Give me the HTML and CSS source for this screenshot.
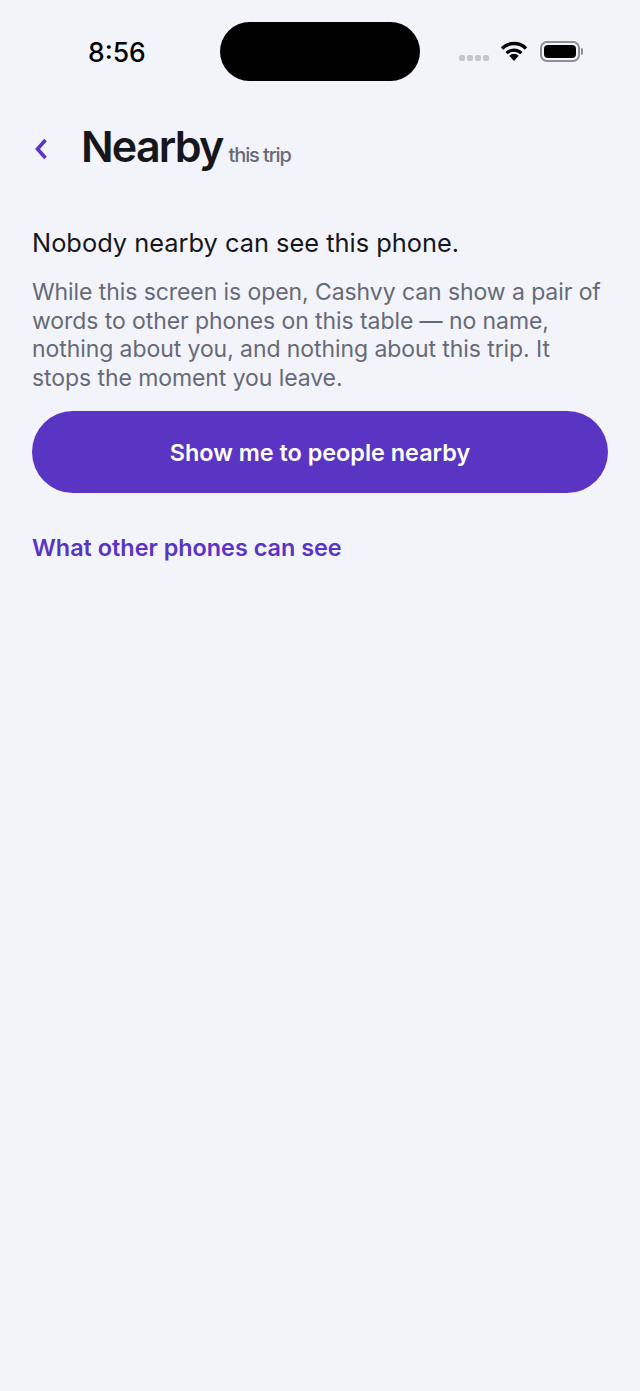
FILE: index.html
```html
<!DOCTYPE html>
<html lang="en">
<head>
  <meta charset="UTF-8">
  <meta name="viewport" content="width=device-width, initial-scale=1.0">
  <title>Nearby</title>
  <link rel="stylesheet" href="styles.css">
</head>
<body>
  <div class="status">
    <span class="time">8:56</span>
    <div class="island"></div>
    <div class="status-icons">
      <div class="signal"><i></i><i></i><i></i><i></i></div>
      <svg class="wifi" width="28" height="22" viewBox="0 0 28 22">
        <path d="M2 8.5 A17 17 0 0 1 26 8.5" fill="none" stroke="#000" stroke-width="3.4"/>
        <path d="M6.6 13.1 A10.5 10.5 0 0 1 21.4 13.1" fill="none" stroke="#000" stroke-width="3.2"/>
        <path d="M9.3 15.8 A6.7 6.7 0 0 1 18.7 15.8 L14 21 Z" fill="#000"/>
      </svg>
      <div class="battery"><div class="battery-fill"></div></div>
      <div class="battery-tip"></div>
    </div>
  </div>

  <div class="header">
    <svg class="back" width="16" height="24" viewBox="0 0 16 24">
      <path d="M13.5 3 L5.5 12 L13.5 21" fill="none" stroke="#5a34c2" stroke-width="3.6"/>
    </svg>
    <h1 class="title">Nearby</h1>
    <span class="subtitle">this trip</span>
  </div>

  <div class="content">
    <p class="lead">Nobody nearby can see this phone.</p>
    <p class="body-text">While this screen is open, Cashvy can show a pair of words to other phones on this table — no name, nothing about you, and nothing about this trip. It stops the moment you leave.</p>
    <button class="primary">Show me to people nearby</button>
    <a class="link">What other phones can see</a>
  </div>
</body>
</html>
```

FILE: styles.css
```css
* {
  box-sizing: border-box;
}

html, body {
  margin: 0;
  height: 100%;
}

body {
  background: #f3f4f9;
  font-family: Inter, "Liberation Sans", sans-serif;
  color: #16171c;
  overflow: hidden;
}

.status {
  height: 81px;
  padding: 22px 56px 0 88px;
  display: flex;
  align-items: flex-start;
}

.time {
  width: 132px;
  margin-top: 15px;
  font-size: 26.5px;
  line-height: 30px;
  font-weight: 500;
  color: #000;
}

.island {
  width: 200px;
  height: 59px;
  border-radius: 30px;
  background: #000;
}

.status-icons {
  margin-left: 39px;
  height: 59px;
  display: flex;
  align-items: center;
}

.signal {
  display: flex;
  gap: 2px;
  margin-top: 13px;
  margin-right: 11px;
}

.signal i {
  display: block;
  width: 6px;
  height: 6px;
  border-radius: 2px;
  background: #c3c5c9;
}

.wifi {
  margin-top: -1px;
  margin-right: 12px;
}

.battery {
  width: 40px;
  height: 21px;
  padding: 2px;
  border: 2px solid #8d8e91;
  border-radius: 7px;
}

.battery-fill {
  height: 100%;
  border-radius: 4px;
  background: #000;
}

.battery-tip {
  width: 2px;
  height: 7px;
  margin-left: 1px;
  border-radius: 0 2px 2px 0;
  background: #8d8e91;
}

.header {
  padding: 34px 32px 0;
  display: flex;
  align-items: baseline;
  height: 146px;
}

.back {
  width: 16px;
  height: 24px;
  margin-right: 33px;
  align-self: flex-start;
  margin-top: 22px;
}

.title {
  margin: 0;
  font-size: 43px;
  line-height: 62px;
  font-weight: 600;
  letter-spacing: -1.8px;
  color: #16171c;
}

.subtitle {
  margin-left: 6px;
  font-size: 20px;
  font-weight: 500;
  letter-spacing: -1.1px;
  color: #666a78;
}

.content {
  padding: 0 32px;
}

.lead {
  margin: 0;
  font-size: 25.4px;
  line-height: 32px;
}

.body-text {
  margin: 19px 0 0;
  font-size: 23px;
  line-height: 28.7px;
  letter-spacing: -0.08px;
  color: #666a78;
}

.primary {
  display: block;
  width: 100%;
  height: 82px;
  margin-top: 18px;
  padding: 2px 0 0;
  border: 0;
  border-radius: 41px;
  background: #5a34c2;
  color: #fff;
  font-family: inherit;
  font-size: 23.4px;
  font-weight: 600;
}

.link {
  display: block;
  margin-top: 40px;
  font-size: 23.4px;
  line-height: 30px;
  font-weight: 600;
  color: #5a34c2;
}
```
